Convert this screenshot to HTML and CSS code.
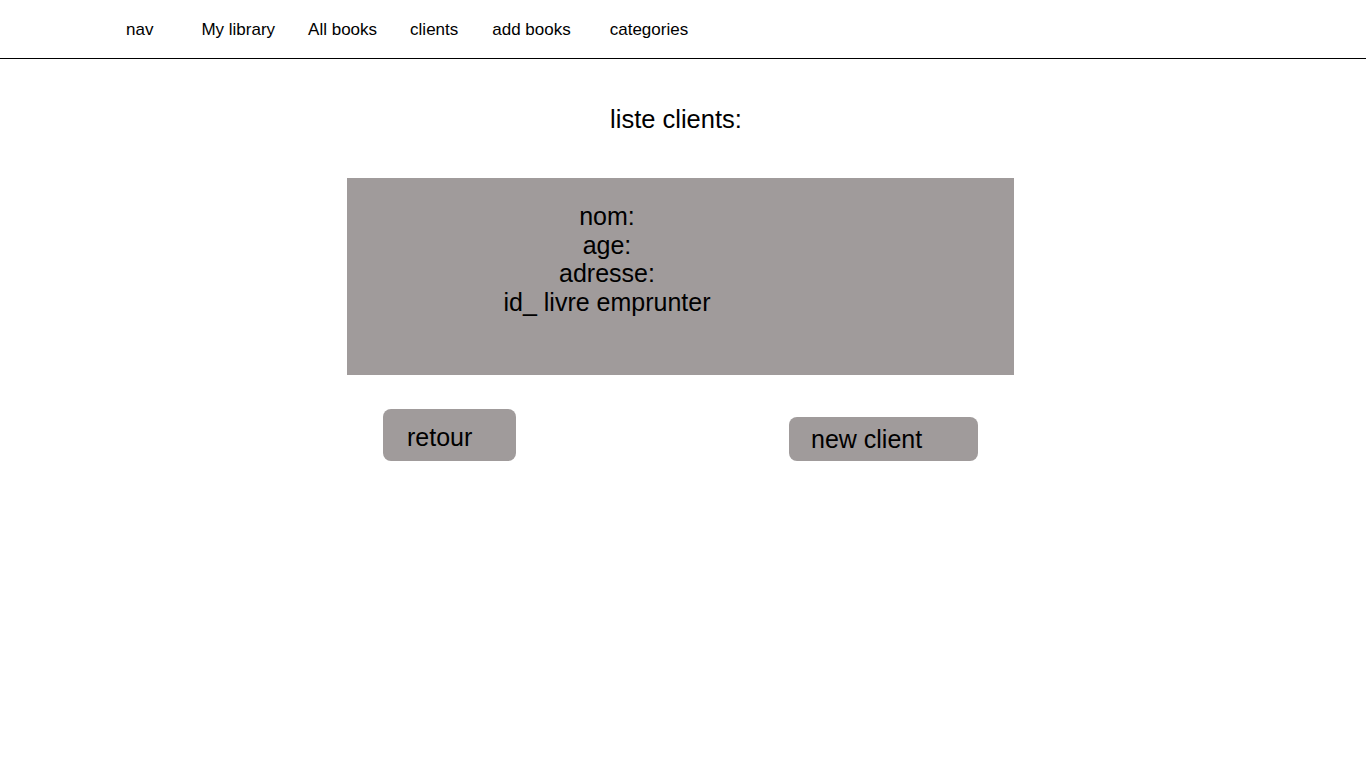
FILE: index.html
```html
<!DOCTYPE html>
<html lang="fr">
<head>
  <meta charset="UTF-8" />
  <meta name="viewport" content="width=device-width, initial-scale=1.0"/>
  <title>liste clients</title>
  <link rel="stylesheet" href="styles.css">
</head>
<body>

  <nav class="topnav">
    <span class="brand">nav</span>
    <a href="#" class="first">My library</a>
    <a href="#">All books</a>
    <a href="#">clients</a>
    <a href="#" class="add">add books</a>
    <a href="#" class="last">categories</a>
  </nav>

  <div class="main">
    <h2>liste clients:</h2>

    <div class="client-card">
      <div class="client-info">
        <p>nom:</p>
        <p>age:</p>
        <p>adresse:</p>
        <p>id_ livre emprunter</p>
      </div>
    </div>

    <div class="actions">
      <button class="btn-back">retour</button>
      <button class="btn-new">new client</button>
    </div>
  </div>

</body>
</html>
```

FILE: styles.css
```css
body {
  font-family: "Liberation Sans", Arial, sans-serif;
  background: #fff;
  color: #000;
  margin: 0;
}

.topnav {
  display: flex;
  align-items: center;
  gap: 33px;
  height: 56px;
  padding: 2px 0 0 126px;
  border-bottom: 1px solid #000;
  font-size: 17px;
}

.topnav a {
  color: #000;
  text-decoration: none;
}

.topnav .first {
  margin-left: 15px;
}

.topnav .add {
  margin-left: 1px;
}

.topnav .last {
  margin-left: 6px;
}

.main {
  width: 667px;
  margin-left: 347px;
}

h2 {
  font-size: 25.5px;
  font-weight: normal;
  text-align: center;
  margin: 46px 9px 0 0;
}

.client-card {
  background: #a09b9b;
  height: 197px;
  margin-top: 44px;
  padding: 24px 147px 0 0;
  box-sizing: border-box;
}

.client-info {
  text-align: center;
  font-size: 25px;
  line-height: 28.7px;
}

.client-info p {
  margin: 0;
}

.actions {
  display: flex;
  justify-content: space-between;
  align-items: flex-end;
  padding: 0 36px;
  margin-top: 34px;
}

button {
  font-family: inherit;
  font-size: 25px;
  color: #000;
  background: #a09b9b;
  border: none;
  border-radius: 8px;
  text-align: left;
  cursor: pointer;
}

.btn-back {
  width: 133px;
  height: 52px;
  padding: 5px 0 0 24px;
}

.btn-new {
  width: 189px;
  height: 44px;
  padding: 0 0 0 22px;
}
```
